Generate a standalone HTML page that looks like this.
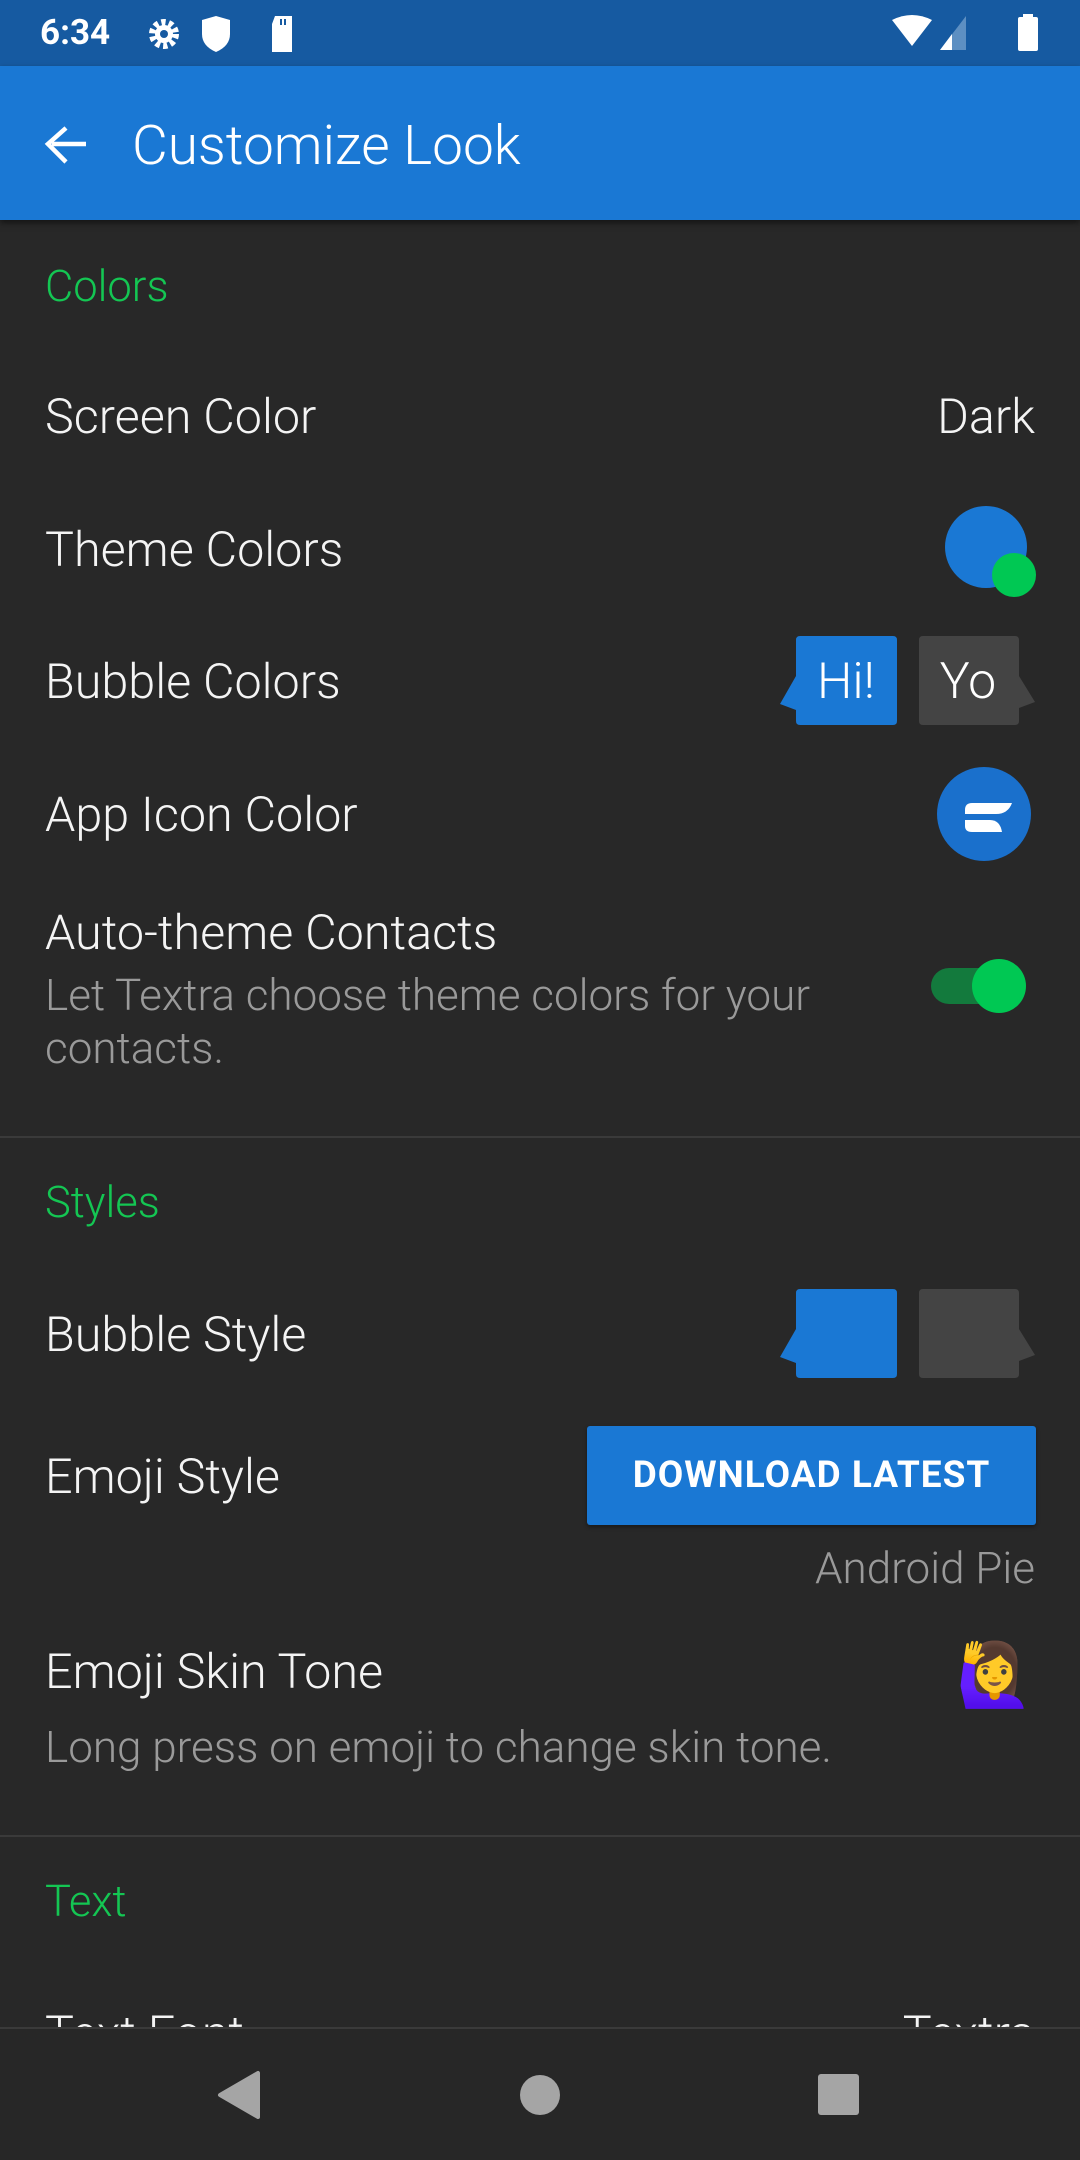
<!DOCTYPE html>
<html><head><meta charset="utf-8"><style>
*{margin:0;padding:0;box-sizing:border-box}
body{width:1080px;height:2160px;background:#282828;position:relative;overflow:hidden;font-family:"Roboto","Liberation Sans",sans-serif;color:#fff}
.t{position:absolute;white-space:nowrap;line-height:60px;height:60px}
.title{font-size:48.5px;font-weight:300;color:#f4f4f4;left:45px}
.sec{font-size:43.5px;color:#14c653;left:45px;font-weight:300}
.sum{font-size:44px;color:#9a9a9a;left:45px;font-weight:300}
.div{position:absolute;left:0;width:1080px;height:2px;background:#3a3a3a}
</style></head><body>
<div style="position:absolute;top:0;left:0;width:1080px;height:66px;background:#165aa1"></div>
<div class="t" style="left:40px;top:3px;font-size:35px;color:#fff;font-weight:bold">6:34</div>
<svg style="position:absolute;left:140px;top:14px" width="170" height="40" viewBox="0 0 170 40">
<circle cx="24" cy="20" r="11" fill="none" stroke="#fff" stroke-width="8" stroke-dasharray="4 3"/><circle cx="24" cy="20" r="9" fill="#fff"/><circle cx="24" cy="20" r="4" fill="#165aa1"/>
<path d="M62 6 L76 2 L90 6 L90 20 Q90 32 76 38 Q62 32 62 20 Z" fill="#fff"/>
<path d="M135 2 L152 2 L152 38 L132 38 L132 10 Z" fill="#fff"/><rect x="140" y="5" width="2" height="6" fill="#165aa1"/><rect x="144" y="5" width="2" height="6" fill="#165aa1"/>
</svg>
<svg style="position:absolute;left:880px;top:14px" width="180" height="40" viewBox="0 0 180 40">
<path d="M36 32 L16 6 Q36 -4 56 6 Z" transform="translate(-4,0)" fill="#fff"/>
<path d="M86 2 L86 36 L60 36 Z" fill="#5d8fc2"/><path d="M72 20 L72 36 L60 36 Z" fill="#fff"/>
<rect x="138" y="3" width="20" height="34" rx="2" fill="#fff"/><rect x="143" y="0" width="10" height="4" fill="#fff"/>
</svg>
<div style="position:absolute;top:66px;left:0;width:1080px;height:154px;background:#1a78d4;box-shadow:0 3px 6px rgba(0,0,0,.5)"></div>
<svg style="position:absolute;left:42px;top:120px" width="48" height="48" viewBox="0 0 48 48"><path d="M44 22 H10 M24 6 L6 22 L24 40" transform="translate(0,2)" stroke="#fff" stroke-width="4.5" fill="none"/></svg>
<div class="t" style="left:132px;top:116px;font-size:55px;font-weight:300">Customize Look</div>

<div class="t sec" style="top:257px">Colors</div>
<div class="t title" style="top:387px">Screen Color</div>
<div class="t title" style="top:387px;left:auto;right:45px">Dark</div>
<div class="t title" style="top:520px">Theme Colors</div>
<svg style="position:absolute;left:940px;top:500px" width="100" height="100"><circle cx="46" cy="47" r="41" fill="#1a78d4"/><circle cx="74" cy="75" r="22" fill="#00c853"/></svg>
<div class="t title" style="top:652px">Bubble Colors</div>
<svg style="position:absolute;left:766px;top:624px" width="290" height="120">
<path d="M30 16 Q30 12 34 12 L127 12 Q131 12 131 16 L131 97 Q131 101 127 101 L34 101 Q30 101 30 97 L30 86 L14 80 L30 52 Z" fill="#1a78d4"/>
<path d="M153 16 Q153 12 157 12 L249 12 Q253 12 253 16 L253 52 L269 78 L253 84 L253 97 Q253 101 249 101 L157 101 Q153 101 153 97 Z" fill="#444"/>
<text x="80" y="74" font-size="50" fill="#fff" text-anchor="middle" font-family="Roboto,Liberation Sans" font-weight="300">Hi!</text>
<text x="202" y="74" font-size="50" fill="#fff" text-anchor="middle" font-family="Roboto,Liberation Sans" font-weight="300">Yo</text>
</svg>
<div class="t title" style="top:785px">App Icon Color</div>
<svg style="position:absolute;left:930px;top:760px" width="110" height="110"><circle cx="54" cy="54" r="47" fill="#1a70cc"/>
<path d="M35 50 Q35 43 42 43 L82 43 Q78 54 66 54 L35 54 Z" fill="#fff"/><path d="M35 60 L60 60 Q70 60 72 72 L42 72 Q35 72 35 66 Z" fill="#fff"/></svg>
<div class="t title" style="top:903px">Auto-theme Contacts</div>
<div class="t sum" style="top:965px">Let Textra choose theme colors for your</div>
<div class="t sum" style="top:1018px">contacts.</div>
<svg style="position:absolute;left:920px;top:950px" width="120" height="80"><rect x="11" y="18" width="88" height="36" rx="18" fill="#137a3d"/><circle cx="79" cy="36" r="27" fill="#00c853"/></svg>
<div class="div" style="top:1136px"></div>

<div class="t sec" style="top:1173px">Styles</div>
<div class="t title" style="top:1305px">Bubble Style</div>
<svg style="position:absolute;left:766px;top:1277px" width="290" height="120">
<path d="M30 16 Q30 12 34 12 L127 12 Q131 12 131 16 L131 97 Q131 101 127 101 L34 101 Q30 101 30 97 L30 86 L14 80 L30 52 Z" fill="#1a78d4"/>
<path d="M153 16 Q153 12 157 12 L249 12 Q253 12 253 16 L253 52 L269 78 L253 84 L253 97 Q253 101 249 101 L157 101 Q153 101 153 97 Z" fill="#444"/>
</svg>
<div class="t title" style="top:1447px">Emoji Style</div>
<div style="position:absolute;left:587px;top:1426px;width:449px;height:99px;background:#1a78d4;border-radius:3px;box-shadow:0 2px 4px rgba(0,0,0,.4);color:#fff;font-size:37px;font-weight:bold;text-align:center;line-height:99px;letter-spacing:1px">DOWNLOAD LATEST</div>
<div class="t sum" style="top:1538px;left:auto;right:45px">Android Pie</div>
<div class="t title" style="top:1642px">Emoji Skin Tone</div>
<div class="t" style="left:956px;top:1640px;font-size:62px;line-height:72px;height:72px">🙋‍♀️</div>
<div class="t sum" style="top:1717px">Long press on emoji to change skin tone.</div>
<div class="div" style="top:1835px"></div>
<div class="t sec" style="top:1872px">Text</div>
<div class="t title" style="top:2004px">Text Font</div>
<div class="t title" style="top:2004px;left:auto;right:45px">Textra</div>

<div style="position:absolute;left:0;top:2027px;width:1080px;height:133px;background:#272727;border-top:2px solid #3a3a3a"></div>
<svg style="position:absolute;left:0;top:2027px" width="1080" height="133">
<path d="M258 46 L258 90 L220 68 Z" fill="#a5a5a5" stroke="#a5a5a5" stroke-width="4" stroke-linejoin="round"/>
<circle cx="540" cy="68" r="20" fill="#a5a5a5"/>
<rect x="818" y="47" width="41" height="41" rx="3" fill="#a5a5a5"/>
</svg>
</body></html>
